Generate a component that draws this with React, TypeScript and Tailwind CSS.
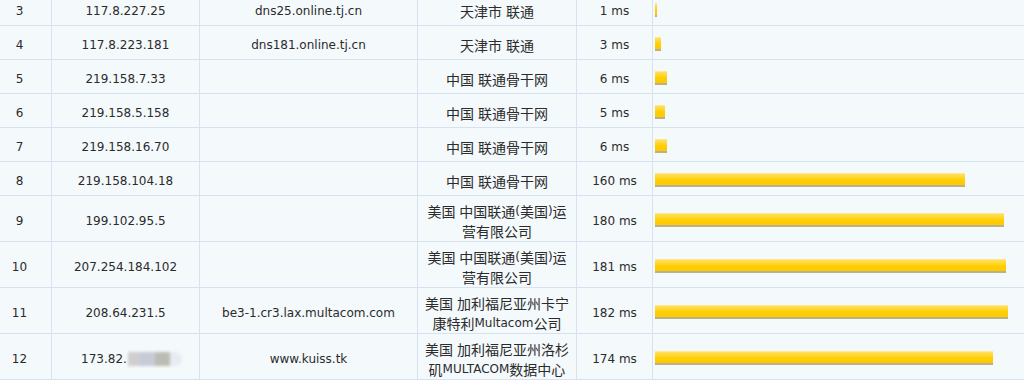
import type { ReactNode } from "react";

type Hop = {
  hop: number;
  ip: string;
  masked?: boolean;
  host: string;
  place: string[];
  ms: number;
};

const hops: Hop[] = [
  { hop: 3, ip: "117.8.227.25", host: "dns25.online.tj.cn", place: ["天津市 联通"], ms: 1 },
  { hop: 4, ip: "117.8.223.181", host: "dns181.online.tj.cn", place: ["天津市 联通"], ms: 3 },
  { hop: 5, ip: "219.158.7.33", host: "", place: ["中国 联通骨干网"], ms: 6 },
  { hop: 6, ip: "219.158.5.158", host: "", place: ["中国 联通骨干网"], ms: 5 },
  { hop: 7, ip: "219.158.16.70", host: "", place: ["中国 联通骨干网"], ms: 6 },
  { hop: 8, ip: "219.158.104.18", host: "", place: ["中国 联通骨干网"], ms: 160 },
  { hop: 9, ip: "199.102.95.5", host: "", place: ["美国 中国联通(美国)运", "营有限公司"], ms: 180 },
  { hop: 10, ip: "207.254.184.102", host: "", place: ["美国 中国联通(美国)运", "营有限公司"], ms: 181 },
  {
    hop: 11,
    ip: "208.64.231.5",
    host: "be3-1.cr3.lax.multacom.com",
    place: ["美国 加利福尼亚州卡宁", "康特利Multacom公司"],
    ms: 182,
  },
  {
    hop: 12,
    ip: "173.82.",
    masked: true,
    host: "www.kuiss.tk",
    place: ["美国 加利福尼亚州洛杉", "矶MULTACOM数据中心"],
    ms: 174,
  },
];

// CJK runs are set a little larger than the latin text, like the original page
function Mixed({ text }: { text: string }) {
  const parts = text.match(/[\u3000-\u9fff\uff00-\uffef]+|[^\u3000-\u9fff\uff00-\uffef]+/g) ?? [];
  return (
    <>
      {parts.map((p, i) =>
        /[\u3000-\u9fff]/.test(p) ? (
          <span key={i} className="text-[14px] leading-none [font-family:'Noto_Sans_CJK_SC',sans-serif]">
            {p}
          </span>
        ) : (
          <span key={i}>{p}</span>
        ),
      )}
    </>
  );
}

function Cell({ children, last }: { children?: ReactNode; last?: boolean }) {
  return (
    <div
      className={`flex min-h-[33px] items-center justify-center pt-[5px] text-center ${
        last ? "" : "border-r border-[#d6e2f0]"
      }`}
    >
      {children}
    </div>
  );
}

function Masked() {
  return (
    <span className="ml-[1px] inline-flex h-[14px] items-center blur-[1.5px]">
      <span className="h-full w-[12px] bg-[#cfcfcf]" />
      <span className="h-full w-[15px] bg-[#c6cbd6]" />
      <span className="h-full w-[15px] bg-[#bcbcb2]" />
      <span className="h-full w-[12px] rounded-r-full bg-[#e6ecf2]" />
    </span>
  );
}

export default function App() {
  return (
    <div className="h-[384px] w-[1024px] overflow-hidden bg-white text-[12px] leading-[20px] text-[#2b2b2b] [font-family:'DejaVu_Sans','Noto_Sans_CJK_SC',sans-serif]">
      <div className="-mt-[8px] bg-[#f4f9fb]">
        {hops.map((h) => (
          <div
            key={h.hop}
            className="grid grid-cols-[52px_148px_218px_159px_76px_1fr] border-b border-[#d6e2f0]"
          >
            <Cell>
              <span className="pr-[12px]">{h.hop}</span>
            </Cell>
            <Cell>
              <span className={`inline-flex items-center ${h.masked ? "pl-[12px]" : ""}`}>
                {h.ip}
                {h.masked && <Masked />}
              </span>
            </Cell>
            <Cell>{h.host}</Cell>
            <Cell>
              <div>
                {h.place.map((line) => (
                  <div key={line} className="flex h-[20px] items-center justify-center whitespace-pre">
                    <Mixed text={line} />
                  </div>
                ))}
              </div>
            </Cell>
            <Cell>{h.ms} ms</Cell>
            <div className="flex min-h-[33px] items-center pl-[2px] pt-[2px]">
              <div
                className="h-[14px] border-t border-b-2 border-t-[#ffe98c] border-b-[#b8b190] bg-gradient-to-b from-[#ffe056] via-[#ffd000] to-[#ffc800]"
                style={{ width: Math.max(2, Math.round(h.ms * 1.94)) }}
              />
            </div>
          </div>
        ))}
      </div>
    </div>
  );
}
